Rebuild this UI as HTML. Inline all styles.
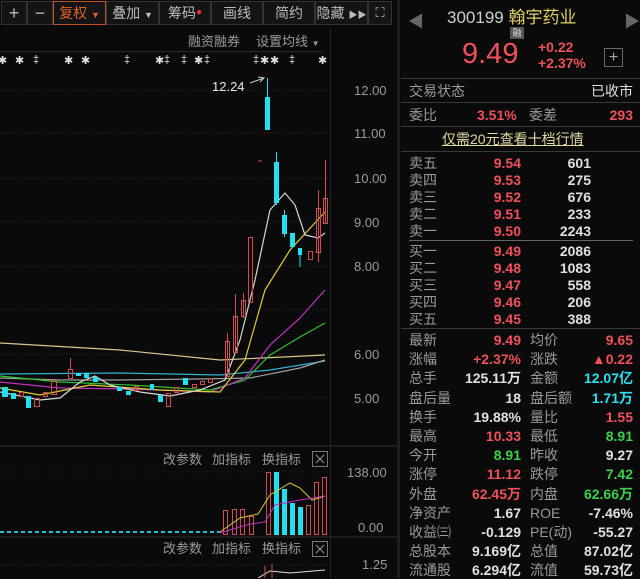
<!DOCTYPE html>
<html><head><meta charset="utf-8">
<style>
*{margin:0;padding:0;box-sizing:border-box}
body{width:640px;height:578px;background:#0a0a0a;overflow:hidden;position:relative;font-family:"Liberation Sans","Noto Sans CJK SC",sans-serif;color:#c8c8c8}
.a{position:absolute;white-space:nowrap}
.tb{position:absolute;top:1px;height:24px;border:1px solid #333;background:#141414;color:#bbb;font-size:14px;line-height:22px;text-align:center}
.r{color:#f0505a}.g{color:#3ad04a}.c{color:#2ae0f0}.w{color:#e0e0e0}.l{color:#9a9a9a}
.row{position:absolute;left:409px;width:224px;height:18px;font-size:14px;line-height:18px}
.row span{position:absolute}
.hl{position:absolute;left:401px;width:239px;height:1px;background:#3a3a3a}
.s{position:absolute;top:54px;font-size:11px;color:#e0e0e0}
</style></head><body>
<div class="tb" style="left:1px;width:26px;font-size:18px">+</div>
<div class="tb" style="left:27px;width:26px;font-size:18px">−</div>
<div class="tb" style="left:53px;width:53px;color:#e0602a;border-color:#c0502a">复权 <span style="font-size:9px">▼</span></div>
<div class="tb" style="left:106px;width:53px">叠加 <span style="font-size:9px">▼</span></div>
<div class="tb" style="left:159px;width:52px">筹码<span style="color:#f03040;font-size:10px;vertical-align:top">●</span></div>
<div class="tb" style="left:211px;width:52px">画线</div>
<div class="tb" style="left:263px;width:52px">简约</div>
<div class="tb" style="left:315px;width:53px">隐藏 <span style="font-size:9px">▶▶</span></div>
<div class="tb" style="left:368px;width:24px;font-size:13px">⛶</div>
<div class="a l" style="left:188px;top:31px;font-size:13px">融资融券</div>
<div class="a l" style="left:256px;top:31px;font-size:13px">设置均线 <span style="font-size:8px">▼</span></div>
<div class="a" style="left:0;top:51px;width:322px;height:1px;background:#2a2a2a"></div>
<div class="s" style="left:-2px">✱</div><div class="s" style="left:15px">✱</div><div class="s" style="left:33px">‡</div>
<div class="s" style="left:64px">✱</div><div class="s" style="left:81px">✱</div><div class="s" style="left:124px">‡</div>
<div class="s" style="left:155px">✱</div><div class="s" style="left:164px">‡</div><div class="s" style="left:181px">‡</div><div class="s" style="left:194px">✱</div><div class="s" style="left:204px">‡</div>
<div class="s" style="left:253px">‡</div><div class="s" style="left:260px">✱</div><div class="s" style="left:270px">✱</div><div class="s" style="left:289px">‡</div><div class="s" style="left:318px">✱</div>
<div class="a" style="left:330px;top:28px;width:1px;height:550px;background:#222"></div>
<div class="a" style="left:397px;top:0;width:3px;height:578px;background:#1e1e1e"></div>
<svg class="a" style="left:0;top:0" width="397" height="578">
<g stroke="#2a2a2a" stroke-dasharray="1 2">
<line x1="0" y1="90" x2="330" y2="90"/><line x1="0" y1="133" x2="330" y2="133"/><line x1="0" y1="178" x2="330" y2="178"/><line x1="0" y1="222" x2="330" y2="222"/><line x1="0" y1="266" x2="330" y2="266"/><line x1="0" y1="310" x2="330" y2="310"/><line x1="0" y1="354" x2="330" y2="354"/><line x1="0" y1="398" x2="330" y2="398"/><line x1="0" y1="472" x2="330" y2="472"/><line x1="0" y1="565" x2="330" y2="565"/>
</g>
<line x1="0" y1="446" x2="397" y2="446" stroke="#2e2e2e"/><line x1="0" y1="537" x2="397" y2="537" stroke="#2e2e2e"/>
<g font-size="13" fill="#9a9a9a" font-family="Liberation Sans"><text x="354" y="95">12.00</text><text x="354" y="138">11.00</text><text x="354" y="183">10.00</text><text x="354" y="227">9.00</text><text x="354" y="271">8.00</text><text x="354" y="359">6.00</text><text x="354" y="403">5.00</text><text x="347" y="477">138.00</text><text x="358" y="532">0.00</text><text x="362" y="569">1.25</text></g>
<text x="212" y="91" font-size="13" fill="#e8e8e8">12.24</text>
<path d="M250 83 L264 78 M258 77 L264 78 L260 82" stroke="#ccc" fill="none"/>
<g fill="none" stroke-width="1.2">
<path d="M0 343 L120 350 L220 360 L325 355" stroke="#d8c890"/>
<path d="M0 374 L120 373 L220 375 L270 370 L325 361" stroke="#30b0d0"/>
<path d="M0 378 L60 380 L120 380 L200 379 L250 378 L300 368 L325 360" stroke="#a0a0a0"/>
<path d="M0 376 L60 382 L130 385 L210 390 L245 380 L270 355 L300 337 L325 323" stroke="#30c030"/>
<path d="M0 382 L60 388 L130 389 L210 392 L245 378 L270 345 L300 318 L325 290" stroke="#c030c0"/>
<path d="M0 388 L40 395 L90 385 L160 390 L220 392 L245 360 L265 290 L290 250 L325 212" stroke="#e0d030"/>
<path d="M0 392 L40 400 L60 398 L80 382 L95 376 L110 385 L140 392 L170 396 L200 390 L225 380 L240 340 L255 280 L270 210 L285 193 L295 205 L305 235 L318 238 L325 233" stroke="#d8d8d8"/>
</g>
<g fill="#22e0f0">
<rect x="265" y="97" width="5" height="33"/><line x1="267.5" y1="78" x2="267.5" y2="130" stroke="#22e0f0"/>
<rect x="274" y="162" width="5" height="41"/><line x1="276.5" y1="152" x2="276.5" y2="205" stroke="#22e0f0"/>
<rect x="282" y="215" width="5" height="19"/><line x1="284.5" y1="210" x2="284.5" y2="237" stroke="#22e0f0"/>
<rect x="290" y="233" width="5" height="14"/><rect x="298" y="248" width="4" height="7"/><line x1="300" y1="248" x2="300" y2="267" stroke="#22e0f0"/>
<rect x="2" y="387" width="6" height="10"/><rect x="11" y="393" width="5" height="6"/><rect x="26" y="396" width="5" height="12"/><rect x="76" y="373" width="5" height="3"/><rect x="84" y="373" width="5" height="5"/><rect x="93" y="377" width="5" height="5"/><rect x="117" y="387" width="5" height="4"/><rect x="126" y="391" width="5" height="4"/><rect x="150" y="384" width="4" height="6"/><rect x="158" y="395" width="5" height="7"/><rect x="183" y="378" width="5" height="7"/>
</g>
<g fill="none" stroke="#d04a50">
<line x1="258" y1="161" x2="262" y2="161"/>
<rect x="316.5" y="208.5" width="4" height="44"/><line x1="318.5" y1="190" x2="318.5" y2="262"/>
<rect x="323.5" y="198.5" width="4" height="25"/><line x1="325.5" y1="160" x2="325.5" y2="223"/>
<rect x="308.5" y="251.5" width="4" height="8"/>
<rect x="248.5" y="237.5" width="4" height="65"/>
<rect x="241.5" y="300.5" width="4" height="16"/><line x1="243.5" y1="293" x2="243.5" y2="318"/>
<rect x="233.5" y="316.5" width="4" height="36"/><line x1="235.5" y1="294" x2="235.5" y2="352"/>
<rect x="225.5" y="341.5" width="4" height="35"/><line x1="227.5" y1="333" x2="227.5" y2="376"/>
<rect x="19.5" y="392.5" width="4" height="4"/><rect x="34.5" y="398.5" width="5" height="8"/><rect x="43.5" y="392.5" width="4" height="4"/><rect x="51.5" y="380.5" width="5" height="14"/><rect x="68.5" y="369.5" width="4" height="9"/><line x1="70.5" y1="358" x2="70.5" y2="370"/><rect x="134.5" y="386.5" width="4" height="4"/><rect x="166.5" y="393.5" width="4" height="13"/><rect x="174.5" y="387.5" width="4" height="5"/><rect x="192.5" y="384.5" width="4" height="3"/><rect x="200.5" y="381.5" width="4" height="3"/><rect x="208.5" y="378.5" width="4" height="4"/>
</g>
<g font-size="13" fill="#9a9a9a"><text x="163" y="464">改参数</text><text x="212" y="464">加指标</text><text x="262" y="464">换指标</text><text x="163" y="553">改参数</text><text x="212" y="553">加指标</text><text x="262" y="553">换指标</text></g>
<rect x="312.5" y="451.5" width="15" height="15" fill="none" stroke="#777"/><path d="M316 455 L324 463 M324 455 L316 463" stroke="#999"/>
<rect x="312.5" y="541.5" width="15" height="15" fill="none" stroke="#777"/><path d="M316 545 L324 553 M324 545 L316 553" stroke="#999"/>
<line x1="0" y1="532" x2="220" y2="532" stroke="#20c0d0" stroke-dasharray="4 3" stroke-width="2"/>
<g fill="none" stroke="#d04a50"><rect x="223.5" y="510.5" width="4" height="24"/><rect x="232.5" y="509.5" width="4" height="25"/><rect x="240.5" y="509.5" width="4" height="25"/><rect x="249.5" y="516.5" width="4" height="18"/><rect x="266.5" y="472.5" width="4" height="62"/><rect x="314.5" y="482.5" width="4" height="52"/><rect x="322.5" y="477.5" width="4" height="57"/><rect x="306.5" y="505.5" width="4" height="29"/></g>
<g fill="#22e0f0"><rect x="274" y="472" width="5" height="63"/><rect x="282" y="489" width="5" height="46"/><rect x="290" y="503" width="5" height="32"/><rect x="298" y="507" width="5" height="28"/></g>
<path d="M220 532 L240 518 L258 514 L270 495 L290 483 L300 488 L312 500 L325 496" stroke="#d8c030" fill="none"/>
<path d="M220 533 L250 524 L265 522 L275 505 L300 500 L325 496" stroke="#c030c0" fill="none"/>
<path d="M258 578 L270 571 L290 573 L325 570" stroke="#ddd" fill="none"/>
<path d="M265 578 V566 M272 578 V564" stroke="#d04a50"/>
</svg>
<div class="a l" style="left:408px;top:8px;font-size:16px;color:#666">◀</div>
<div class="a l" style="left:624px;top:8px;font-size:16px;color:#666">▶</div>
<div class="a" style="left:447px;top:3px;font-size:17px;color:#ccc">300199 <span style="color:#e0d060">翰宇药业</span></div>
<div class="a" style="left:510px;top:27px;width:14px;height:12px;background:#555;color:#ddd;font-size:9px;line-height:12px;text-align:center">融</div>
<div class="a r" style="left:462px;top:38px;font-size:29px">9.49</div>
<div class="a r" style="left:538px;top:39px;font-size:14px;line-height:16px;font-weight:bold">+0.22<br>+2.37%</div>
<div class="a" style="left:604px;top:48px;width:19px;height:19px;border:1px solid #666;color:#aaa;font-size:16px;line-height:17px;text-align:center">+</div>
<div class="hl" style="top:78px"></div>
<div class="row" style="top:82px"><span class="l" style="left:0">交易状态</span><span class="w" style="right:0">已收市</span></div>
<div class="hl" style="top:102px"></div>
<div class="row" style="top:106px"><span class="l" style="left:0">委比</span><span class="r" style="left:68px;font-weight:bold">3.51%</span><span class="l" style="left:120px">委差</span><span class="r" style="right:0;font-weight:bold">293</span></div>
<div class="hl" style="top:126px"></div>
<div class="a" style="left:442px;top:129px;font-size:14px;color:#e0d8a0;text-decoration:underline">仅需20元查看十档行情</div>
<div class="hl" style="top:151px"></div>
<div id="ob"></div>
<div class="a" style="left:409px;top:240px;width:224px;height:1px;background:#666"></div>
<div class="hl" style="top:328px"></div>
<div id="st"></div>
<script>
var ob=[["卖五","9.54","601"],["卖四","9.53","275"],["卖三","9.52","676"],["卖二","9.51","233"],["卖一","9.50","2243"],["买一","9.49","2086"],["买二","9.48","1083"],["买三","9.47","558"],["买四","9.46","206"],["买五","9.45","388"]];
var h="";ob.forEach(function(o,i){var t=154+i*17+(i>4?3:0);h+='<div class="row" style="top:'+t+'px"><span class="l" style="left:0">'+o[0]+'</span><span class="r" style="right:112px;font-weight:bold">'+o[1]+'</span><span class="w" style="right:42px;font-weight:bold">'+o[2]+'</span></div>';});
document.getElementById("ob").innerHTML=h;
var st=[["最新","9.49","r","均价","9.65","r"],["涨幅","+2.37%","r","涨跌","▲0.22","r"],["总手","125.11万","w","金额","12.07亿","c"],["盘后量","18","w","盘后额","1.71万","c"],["换手","19.88%","w","量比","1.55","r"],["最高","10.33","r","最低","8.91","g"],["今开","8.91","g","昨收","9.27","w"],["涨停","11.12","r","跌停","7.42","g"],["外盘","62.45万","r","内盘","62.66万","g"],["净资产","1.67","w","ROE","-7.46%","w"],["收益㈢","-0.129","w","PE(动)","-55.27","w"],["总股本","9.169亿","w","总值","87.02亿","w"],["流通股","6.294亿","w","流值","59.73亿","w"]];
h="";st.forEach(function(o,i){var t=331+i*19.2;h+='<div class="row" style="top:'+t+'px"><span class="l" style="left:0">'+o[0]+'</span><span class="'+o[2]+'" style="right:112px;font-weight:bold">'+o[1]+'</span><span class="l" style="left:121px">'+o[3]+'</span><span class="'+o[5]+'" style="right:0;font-weight:bold">'+o[4]+'</span></div>';});
document.getElementById("st").innerHTML=h;
</script>
</body></html>
